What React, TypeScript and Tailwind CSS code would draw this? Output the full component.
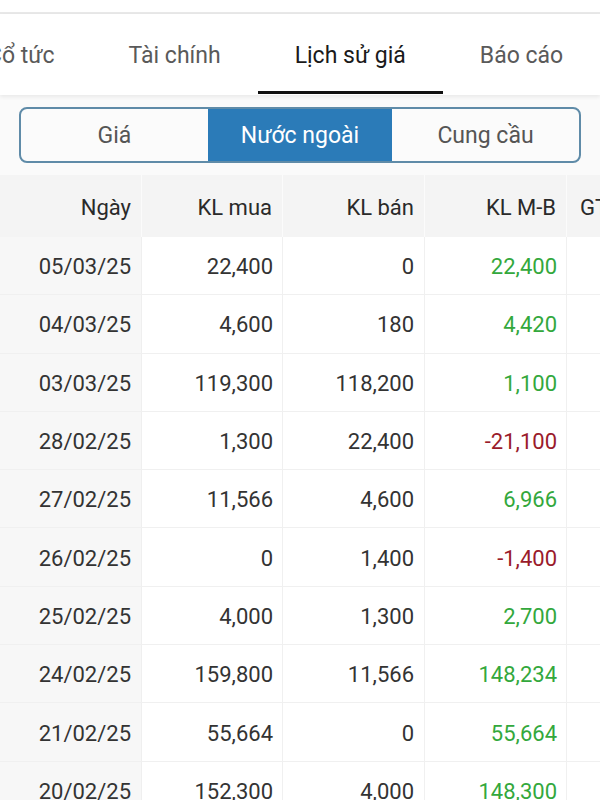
import React from "react";

type Row = { date: string; buy: string; sell: string; net: string; up: boolean };

const rows: Row[] = [
  { date: "05/03/25", buy: "22,400", sell: "0", net: "22,400", up: true },
  { date: "04/03/25", buy: "4,600", sell: "180", net: "4,420", up: true },
  { date: "03/03/25", buy: "119,300", sell: "118,200", net: "1,100", up: true },
  { date: "28/02/25", buy: "1,300", sell: "22,400", net: "-21,100", up: false },
  { date: "27/02/25", buy: "11,566", sell: "4,600", net: "6,966", up: true },
  { date: "26/02/25", buy: "0", sell: "1,400", net: "-1,400", up: false },
  { date: "25/02/25", buy: "4,000", sell: "1,300", net: "2,700", up: true },
  { date: "24/02/25", buy: "159,800", sell: "11,566", net: "148,234", up: true },
  { date: "21/02/25", buy: "55,664", sell: "0", net: "55,664", up: true },
  { date: "20/02/25", buy: "152,300", sell: "4,000", net: "148,300", up: true },
];

const tabs = ["Cổ tức", "Tài chính", "Lịch sử giá", "Báo cáo"];
const segments = ["Giá", "Nước ngoài", "Cung cầu"];
const cols = "grid grid-cols-[142px_141px_142px_142px_142px]";

export default function App() {
  return (
    <div className="h-[800px] w-[600px] overflow-hidden bg-[#fafafa] font-['Roboto',sans-serif] text-[22px] text-[#333]">
      <div className="h-[12px] bg-white" />
      <div className="h-[2px] bg-[#e8e8e8]" />

      <nav className="relative z-10 flex h-[81px] overflow-hidden bg-white text-[23px] shadow-[0_2px_4px_rgba(0,0,0,0.07)]">
        <div className="-ml-[50px] flex shrink-0 whitespace-nowrap">
          {tabs.map((t) => {
            const active = t === "Lịch sử giá";
            return (
              <div key={t} className="flex shrink-0 flex-col px-[37px]">
                <span
                  className={
                    active
                      ? "flex flex-1 items-center pt-[7px] text-[#1a1a1a]"
                      : "flex flex-1 items-center pt-[7px] text-[#5a5a5a]"
                  }
                >
                  {t}
                </span>
                <div className={active ? "-mx-[37px] mb-[1px] h-[3px] bg-[#111]" : "mb-[1px] h-[3px]"} />
              </div>
            );
          })}
        </div>
      </nav>

      <div className="px-[19px] pb-[12px] pt-[12px]">
        <div className="grid h-[56px] grid-cols-[187px_184px_1fr] overflow-hidden rounded-[8px] border-2 border-[#5f8ba8] bg-[#fbfbfb] text-[23px]">
          {segments.map((s) => (
            <div
              key={s}
              className={
                s === "Nước ngoài"
                  ? "flex items-center justify-center pt-[2px] bg-[#2b7bb8] text-white"
                  : "flex items-center justify-center pt-[2px] text-[#555]"
              }
            >
              {s}
            </div>
          ))}
        </div>
      </div>

      <div className="bg-white">
        <div className={`${cols} h-[62px] bg-[#f4f4f4]`}>
          {["Ngày", "KL mua", "KL bán", "KL M-B", "GT"].map((h, i) => (
            <div
              key={h}
              className={
                i === 4
                  ? "flex items-center pl-[13px] pt-[2px] text-[#2a2a2a]"
                  : "flex items-center justify-end border-r border-[#fbfbfb] pr-[10px] pt-[2px] text-[#2a2a2a]"
              }
            >
              {h}
            </div>
          ))}
        </div>
        {rows.map((r) => (
          <div key={r.date} className={`${cols} h-[58.3px] border-b border-[#f0f0f0] [&>div]:pt-[2px]`}>
            <div className="flex items-center justify-end border-r border-[#efefef] bg-[#f7f7f7] pr-[10px]">
              {r.date}
            </div>
            <div className="flex items-center justify-end border-r border-[#f0f0f0] pr-[9px]">{r.buy}</div>
            <div className="flex items-center justify-end border-r border-[#f0f0f0] pr-[10px]">{r.sell}</div>
            <div
              className={
                r.up
                  ? "flex items-center justify-end border-r border-[#f0f0f0] pr-[9px] text-[#33a83c]"
                  : "flex items-center justify-end border-r border-[#f0f0f0] pr-[9px] text-[#9a1b2b]"
              }
            >
              {r.net}
            </div>
            <div />
          </div>
        ))}
      </div>
    </div>
  );
}
